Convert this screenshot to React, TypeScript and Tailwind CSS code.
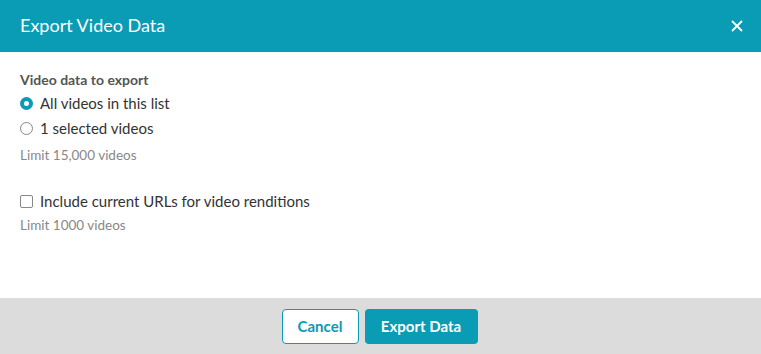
import React, { useState } from 'react';

const App: React.FC = () => {
  const [scope, setScope] = useState<'all' | 'selected'>('all');
  const [includeUrls, setIncludeUrls] = useState(false);

  return (
    <div className="w-[761px] h-[354px] bg-white flex flex-col font-['Lato',sans-serif]">
      <div className="h-[52px] bg-[#0a9bb5] flex items-center justify-between pl-5 pr-[18px]">
        <h2 className="text-white text-[18px] leading-none pb-[2px]">Export Video Data</h2>
        <button className="text-white">
          <svg width="12" height="12" viewBox="0 0 12 12">
            <path d="M1 1L11 11M11 1L1 11" stroke="white" strokeWidth="1.8" />
          </svg>
        </button>
      </div>

      <div className="flex-1 px-5 pt-[19px]">
        <p className="text-[14px] font-bold text-[#555] leading-[18px]">Video data to export</p>
        <label className="flex items-center gap-[7px] mt-[5px] h-[18px]" onClick={() => setScope('all')}>
          {scope === 'all' ? (
            <span className="w-[13px] h-[13px] rounded-full border-[4px] border-[#0a9bb5] bg-white" />
          ) : (
            <span className="w-[13px] h-[13px] rounded-full border border-[#888] bg-white" />
          )}
          <span className="text-[15px] leading-[18px] text-[#333]">All videos in this list</span>
        </label>
        <label className="flex items-center gap-[7px] mt-[7px] h-[18px]" onClick={() => setScope('selected')}>
          {scope === 'selected' ? (
            <span className="w-[13px] h-[13px] rounded-full border-[4px] border-[#0a9bb5] bg-white" />
          ) : (
            <span className="w-[13px] h-[13px] rounded-full border border-[#888] bg-white" />
          )}
          <span className="text-[15px] leading-[18px] text-[#333]">1 selected videos</span>
        </label>
        <p className="text-[13.5px] text-[#888] mt-[10px] leading-[16px]">Limit 15,000 videos</p>

        <label className="flex items-center gap-[7px] mt-[29px] h-[18px]" onClick={() => setIncludeUrls(!includeUrls)}>
          <span
            className={
              includeUrls
                ? 'w-[13px] h-[13px] rounded-[2px] border border-[#0a9bb5] bg-[#0a9bb5]'
                : 'w-[13px] h-[13px] rounded-[2px] border border-[#888] bg-white'
            }
          />
          <span className="text-[15px] leading-[18px] text-[#333]">Include current URLs for video renditions</span>
        </label>
        <p className="text-[13.5px] text-[#888] mt-[7px] leading-[16px]">Limit 1000 videos</p>
      </div>

      <div className="h-[56px] bg-[#dcdcdc] flex items-center justify-center gap-[6px] pr-[2px]">
        <button className="w-[77px] h-[35px] bg-white border border-[#0a9bb5] rounded-[4px] text-[#0a9bb5] text-[15px] font-bold">
          Cancel
        </button>
        <button className="w-[113px] h-[35px] bg-[#0a9bb5] rounded-[4px] text-white text-[15px] font-bold">
          Export Data
        </button>
      </div>
    </div>
  );
};

export default App;
